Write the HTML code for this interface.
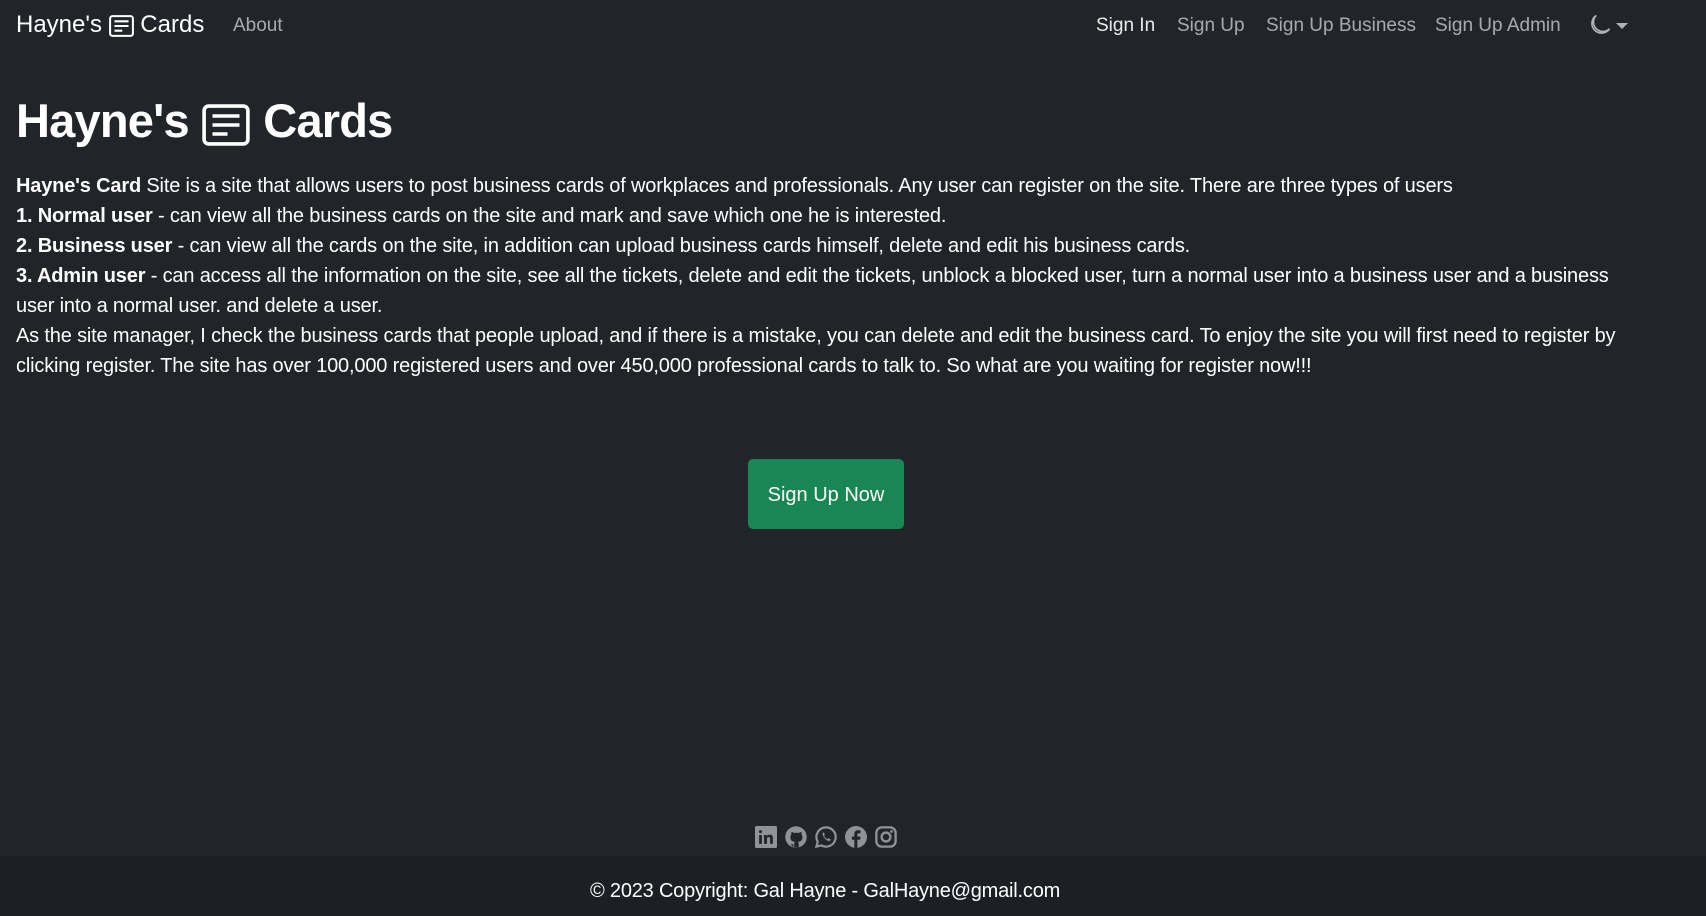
<!DOCTYPE html>
<html><head><meta charset="utf-8"><style>
body{margin:0;background:#212529;color:#dee2e6;font-family:"Liberation Sans",sans-serif;width:1706px;height:916px;position:relative;overflow:hidden}
.a{position:absolute;white-space:nowrap}
.nav{font-size:19px;color:rgba(222,226,230,.7);top:15px}
p{margin:0}
.line{position:absolute;left:16px;white-space:nowrap;font-size:20px;letter-spacing:-0.17px;color:#fff;line-height:30px}
svg{display:inline-block;vertical-align:middle}
</style></head><body>
<div class="a" style="left:16px;top:11px;font-size:24px;color:#fff">Hayne's <svg width="25" height="22" viewBox="0 0 16 14"><rect x="0.7" y="0.7" width="14.6" height="12.6" rx="1.5" fill="none" stroke="#fff" stroke-width="1.3"/><path d="M3.5 4h9M3.5 7h9M3.5 10h5" stroke="#fff" stroke-width="1.3"/></svg> Cards</div>
<div class="a nav" style="left:233px">About</div>
<div class="a nav" style="left:1096px;color:#fff;opacity:.9">Sign In</div>
<div class="a nav" style="left:1177px">Sign Up</div>
<div class="a nav" style="left:1266px">Sign Up Business</div>
<div class="a nav" style="left:1435px">Sign Up Admin</div>
<div class="a" style="left:1588px;top:14px"><svg width="22" height="24" viewBox="0 0 16 16"><path d="M6 .3A7 7 0 1 0 15.7 10 6 6 0 0 1 6 .3z" fill="none" stroke="#aeb2b6" stroke-width="1.2"/></svg></div>
<div class="a" style="left:1616px;top:23px;width:0;height:0;border-left:6px solid transparent;border-right:6px solid transparent;border-top:6px solid #aeb2b6"></div>

<div class="a" style="left:16px;top:93px;font-size:47px;font-weight:bold;color:#fff;letter-spacing:-0.8px">Hayne's <svg width="50" height="42" viewBox="0 0 16 14"><rect x="0.7" y="0.7" width="14.6" height="12.6" rx="1.5" fill="none" stroke="#fff" stroke-width="1.2"/><path d="M3.5 4h9M3.5 7h9M3.5 10h5" stroke="#fff" stroke-width="1.2"/></svg> Cards</div>

<div class="line" style="top:171px"><b>Hayne's Card</b> Site is a site that allows users to post business cards of workplaces and professionals. Any user can register on the site. There are three types of users</div>
<div class="line" style="top:201px"><b>1. Normal user</b> - can view all the business cards on the site and mark and save which one he is interested.</div>
<div class="line" style="top:231px"><b>2. Business user</b> - can view all the cards on the site, in addition can upload business cards himself, delete and edit his business cards.</div>
<div class="line" style="top:261px"><b>3. Admin user</b> - can access all the information on the site, see all the tickets, delete and edit the tickets, unblock a blocked user, turn a normal user into a business user and a business</div>
<div class="line" style="top:291px">user into a normal user. and delete a user.</div>
<div class="line" style="top:321px">As the site manager, I check the business cards that people upload, and if there is a mistake, you can delete and edit the business card. To enjoy the site you will first need to register by</div>
<div class="line" style="top:351px">clicking register. The site has over 100,000 registered users and over 450,000 professional cards to talk to. So what are you waiting for register now!!!</div>

<div class="a" style="left:748px;top:459px;width:156px;height:70px;background:#198754;border-radius:5px;color:#fff;font-size:20px;line-height:72px;text-align:center">Sign Up Now</div>

<div class="a" style="left:755px;top:826px;display:flex;gap:8px">
<svg width="22" height="22" viewBox="0 0 16 16"><rect width="16" height="16" rx="1" fill="#8f9397"/><path d="M3 6.5h2V13H3zM4 3a1.1 1.1 0 1 1 0 2.2A1.1 1.1 0 0 1 4 3zM6.5 6.5h2v1c.4-.7 1.2-1.2 2.3-1.2 2 0 2.2 1.3 2.2 3V13h-2V9.7c0-.8 0-1.6-1-1.6s-1.3.8-1.3 1.6V13h-2z" fill="#212529"/></svg>
<svg width="22" height="22" viewBox="0 0 16 16"><circle cx="8" cy="8" r="7.8" fill="#8f9397"/><path d="M6 15.5v-2.3c-2 .4-2.5-.9-2.5-.9M10 15.5v-2.5c0-.8-.3-1.2-.6-1.5 2-.2 3.3-1 3.3-3.4 0-.8-.3-1.4-.7-1.9.1-.3.2-1-.1-1.8 0 0-.6-.2-1.9.7a6.5 6.5 0 0 0-3.4 0C5.3 4.2 4.7 4.4 4.7 4.4c-.3.8-.1 1.5-.1 1.8-.4.5-.7 1.1-.7 1.9 0 2.4 1.3 3.2 3.3 3.4-.3.3-.5.7-.5 1.3v2.7" fill="#212529"/></svg>
<svg width="22" height="22" viewBox="0 0 16 16"><path d="M8 1a7 7 0 0 0-6 10.5L1 15l3.6-.9A7 7 0 1 0 8 1z" fill="none" stroke="#8f9397" stroke-width="1.6"/><path d="M5.5 5c.5-.5 1-.3 1.2.2l.5 1.2-.6.8c.5 1 1.3 1.8 2.3 2.3l.8-.6 1.2.5c.5.2.6.8.1 1.2-1.5 1.4-5.8-2.4-5.5-5.6z" fill="#8f9397"/></svg>
<svg width="22" height="22" viewBox="0 0 16 16"><circle cx="8" cy="8" r="8" fill="#8f9397"/><path d="M9 16V10h2l.3-2.3H9V6.3c0-.6.2-1 1-1h1.3V3.2A15 15 0 0 0 9.5 3C8 3 6.8 4 6.8 5.8v1.9H5V10h1.8v6z" fill="#212529"/></svg>
<svg width="22" height="22" viewBox="0 0 16 16"><rect x="1" y="1" width="14" height="14" rx="4" fill="none" stroke="#8f9397" stroke-width="1.7"/><circle cx="8" cy="8" r="3.2" fill="none" stroke="#8f9397" stroke-width="1.7"/><circle cx="12" cy="4" r="1" fill="#8f9397"/></svg>
</div>

<div class="a" style="left:0;top:856px;width:1706px;height:60px;background:#1c1f23"></div>
<div class="a" style="left:590px;top:880px;font-size:20px;color:#fff;letter-spacing:-0.2px">© 2023 Copyright: Gal Hayne - GalHayne@gmail.com</div>
</body></html>
